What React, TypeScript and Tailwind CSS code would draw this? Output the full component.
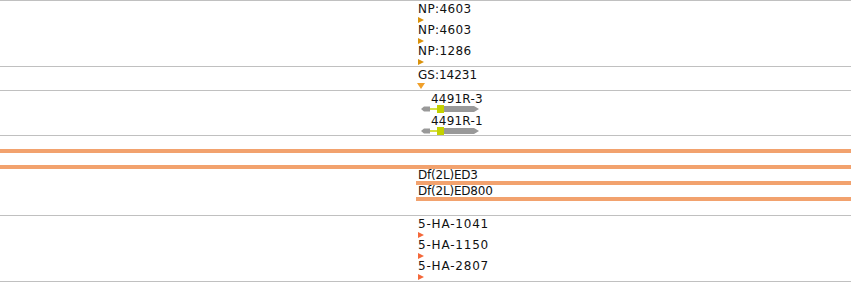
const font = { fontFamily: '"DejaVu Sans", sans-serif' };

function Tri({ color, down = false }: { color: string; down?: boolean }) {
  return down ? (
    <svg width="8" height="6" viewBox="0 0 8 6" className="block">
      <path d="M0 0 L8 0 L4 6 Z" fill={color} />
    </svg>
  ) : (
    <svg width="6" height="6" viewBox="0 0 6 6" className="block">
      <path d="M0 0 L6 3 L0 6 Z" fill={color} />
    </svg>
  );
}

function Feature({ label, color, wide }: { label: string; color: string; wide?: boolean }) {
  return (
    <div className="flex h-[21px] flex-col">
      <span
        className={
          wide
            ? "h-[14px] text-[12px] leading-[14px] tracking-[0.8px] text-[#111]"
            : "h-[14px] text-[12px] leading-[14px] tracking-[0.4px] text-[#111]"
        }
      >
        {label}
      </span>
      <div className="mt-[1px]">
        <Tri color={color} />
      </div>
    </div>
  );
}

function Transcript({ label }: { label: string }) {
  return (
    <div className="flex h-[22px] flex-col pl-[13px]">
      <span className="h-[13px] text-[12px] leading-[14px] tracking-[0.2px] text-[#111]">{label}</span>
      <svg width="58" height="8" viewBox="0 0 58 8" className="-ml-[10px] block">
        <path d="M3 1.5 H9 V6.5 H3 Z" fill="#999" />
        <path d="M3 1.5 L0 4 L3 6.5 Z" fill="#999" />
        <path d="M9 4 H16" stroke="#c8d400" strokeWidth="1.5" />
        <path d="M16 0 H23 V8 H16 Z" fill="#c4d100" />
        <path d="M23 1 H53 L58 4 L53 7 H23 Z" fill="#999" />
      </svg>
    </div>
  );
}

export default function App() {
  return (
    <div className="flex h-[282px] w-[851px] flex-col bg-white" style={font}>
      <div className="h-[67px] border-y border-[#c0c0c0] pl-[418px] pt-[1px]">
        <Feature label="NP:4603" color="#d9920b" />
        <Feature label="NP:4603" color="#d9920b" />
        <Feature label="NP:1286" color="#d9920b" />
      </div>
      <div className="h-[24px] border-b border-[#c0c0c0] pl-[417px] pt-[1px]">
        <div className="flex flex-col">
          <span className="h-[14px] pl-[1px] text-[12px] leading-[14px] text-[#111]">GS:14231</span>
          <div className="mt-[1px]">
            <Tri color="#f0a02a" down />
          </div>
        </div>
      </div>
      <div className="h-[45px] border-b border-[#c0c0c0] pl-[418px] pt-[1px]">
        <Transcript label="4491R-3" />
        <Transcript label="4491R-1" />
      </div>
      <div className="flex h-[80px] flex-col border-b border-[#c0c0c0] pt-[13px]">
        <div className="h-[4px] bg-[#f2a26e]" />
        <div className="mt-[12px] h-[4px] bg-[#f2a26e]" />
        <div className="flex flex-col pl-[416px]">
          <span className="h-[12px] pl-[2px] text-[12px] leading-[12px] tracking-[-0.2px] text-[#111]">Df(2L)ED3</span>
          <div className="h-[4px] bg-[#f2a26e]" />
          <span className="h-[12px] pl-[2px] text-[12px] leading-[12px] tracking-[-0.2px] text-[#111]">Df(2L)ED800</span>
          <div className="h-[4px] bg-[#f2a26e]" />
        </div>
      </div>
      <div className="h-[66px] border-b border-[#c0c0c0] pl-[418px] pt-[1px]">
        <Feature label="5-HA-1041" color="#f4683a" wide />
        <Feature label="5-HA-1150" color="#f4683a" wide />
        <Feature label="5-HA-2807" color="#f4683a" wide />
      </div>
    </div>
  );
}
